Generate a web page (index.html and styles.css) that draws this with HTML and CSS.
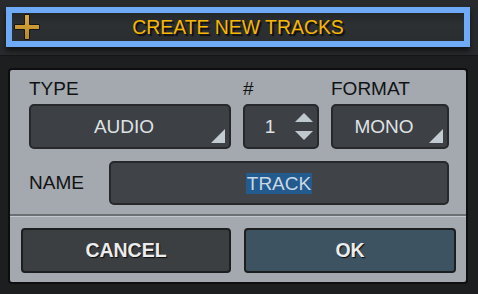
FILE: index.html
```html
<!DOCTYPE html>
<html>
<head>
<meta charset="utf-8">
<link rel="stylesheet" href="styles.css">
</head>
<body>
<div class="app">
  <div class="topbar">
    <div class="header">
      <svg class="plus" width="26" height="26" viewBox="0 0 26 26">
        <defs>
          <linearGradient id="gold" x1="0" y1="0" x2="0" y2="1">
            <stop offset="0" stop-color="#dcaa3c"/>
            <stop offset="1" stop-color="#b8882a"/>
          </linearGradient>
        </defs>
        <path d="M10.5 0.5 H15.5 V10.5 H25.5 V15.5 H15.5 V25.5 H10.5 V15.5 H0.5 V10.5 H10.5 Z" fill="url(#gold)" stroke="#15161a" stroke-width="1"/>
      </svg>
      <div class="title">CREATE NEW TRACKS</div>
      <div class="spacer"></div>
    </div>
  </div>
  <div class="panel">
    <div class="fields">
      <div class="label">TYPE</div>
      <div class="label">#</div>
      <div class="label">FORMAT</div>
      <div class="control dropdown"><span class="value">AUDIO</span><svg class="corner" width="14" height="14" viewBox="0 0 14 14"><path d="M14 0 V14 H0 Z" fill="#c3cbd2"/></svg></div>
      <div class="control number"><span class="num">1</span><span class="arrows"><svg width="18" height="27" viewBox="0 0 18 27"><path d="M9 0 L18 9 H0 Z" fill="#c0c8cf"/><path d="M0 18 H18 L9 27 Z" fill="#c0c8cf"/></svg></span></div>
      <div class="control dropdown"><span class="value">MONO</span><svg class="corner" width="14" height="14" viewBox="0 0 14 14"><path d="M14 0 V14 H0 Z" fill="#c3cbd2"/></svg></div>
    </div>
    <div class="name-row">
      <div class="name-label">NAME</div>
      <div class="name-input"><span class="selected">TRACK</span></div>
    </div>
    <div class="sep"></div>
    <div class="buttons">
      <div class="btn cancel">CANCEL</div>
      <div class="btn ok">OK</div>
    </div>
  </div>
</div>
</body>
</html>
```

FILE: styles.css
```css
html, body {
  margin: 0;
  padding: 0;
}
body {
  background: #1d1e20;
  font-family: "Liberation Sans", Arial, sans-serif;
  width: 478px;
  height: 294px;
  overflow: hidden;
}
.app {
  width: 478px;
  height: 294px;
}
.topbar {
  height: 55px;
  background: #282a2d;
  border-bottom: 1px solid #151618;
  padding: 7px 0 0 6px;
  box-sizing: content-box;
  height: 48px;
}
.header {
  width: 464px;
  height: 40px;
  box-sizing: border-box;
  border: 6px solid #6eaaf6;
  background: linear-gradient(#24272a, #2d3033 40%, #2b2e31);
  box-shadow: 0 4px 5px rgba(0, 0, 0, 0.55);
  display: flex;
  align-items: center;
  padding: 0 2px;
}
.plus {
  display: block;
  width: 26px;
  height: 26px;
  flex: none;
}
.spacer {
  width: 26px;
  flex: none;
}
.title {
  flex: 1;
  text-align: center;
  color: #f7b600;
  font-size: 19.4px;
  line-height: 22px;
  text-shadow: 2px 2px 1px #0c0d0f;
  letter-spacing: 0;
}
.panel {
  margin: 12px 0 0 8px;
  width: 460px;
  height: 216px;
  box-sizing: border-box;
  border: 2px solid #0d0e10;
  border-radius: 4px;
  background: #a3a9ae;
}
.fields {
  display: grid;
  grid-template-columns: 202px 76px 118px;
  column-gap: 12px;
  row-gap: 4px;
  padding: 8px 0 0 19px;
}
.label {
  font-size: 19px;
  line-height: 22px;
  color: #111214;
}
.control {
  position: relative;
  height: 45px;
  box-sizing: border-box;
  border: 2px solid #26282b;
  border-radius: 5px;
  background: #3d4044;
  color: #dfe2e5;
  font-size: 19px;
  display: flex;
  align-items: center;
}
.dropdown .value {
  flex: 1;
  text-align: center;
  padding-right: 12px;
}
.corner {
  position: absolute;
  right: 4px;
  bottom: 4px;
  display: block;
}
.number .num {
  flex: 1;
  text-align: center;
  padding-left: 2px;
}
.arrows {
  display: flex;
  width: 18px;
  margin-right: 4px;
  margin-left: 2px;
}
.arrows svg {
  display: block;
}
.name-row {
  display: flex;
  align-items: center;
  margin-top: 12px;
  padding-left: 19px;
}
.name-label {
  width: 80px;
  font-size: 19px;
  line-height: 22px;
  color: #111214;
}
.name-input {
  width: 340px;
  height: 44px;
  box-sizing: border-box;
  border: 2px solid #26282b;
  border-radius: 5px;
  background: #404347;
  display: flex;
  align-items: center;
  justify-content: center;
  font-size: 19px;
}
.selected {
  background: #245b8e;
  color: #c9d8e6;
  line-height: 21px;
  padding: 0 1px;
}
.sep {
  margin-top: 9px;
  height: 2px;
  background: #6b7074;
  border-bottom: 1px solid #c3c9cd;
}
.buttons {
  display: flex;
  gap: 13px;
  padding: 11px 0 0 11px;
}
.btn {
  height: 45px;
  box-sizing: border-box;
  border: 2px solid #1c1e20;
  border-radius: 4px;
  display: flex;
  align-items: center;
  justify-content: center;
  font-weight: bold;
  font-size: 19.5px;
  color: #ebeced;
  text-shadow: 1px 1px 1px #0d0e10;
}
.cancel {
  width: 210px;
  background: #3c3f42;
}
.ok {
  width: 212px;
  background: #3e5361;
}
```
